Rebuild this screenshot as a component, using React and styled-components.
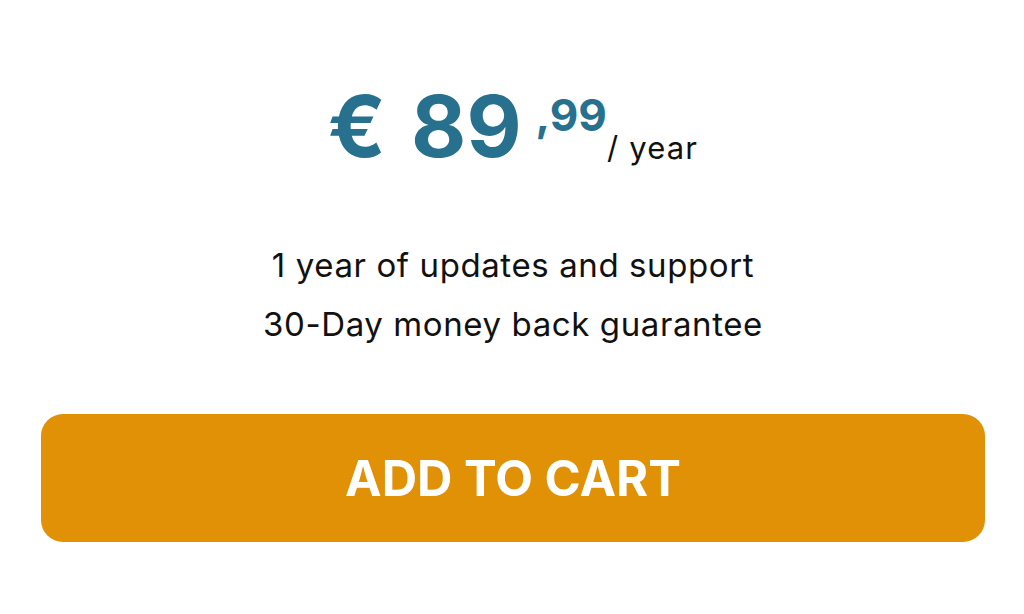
import React from "react";
import styled, { createGlobalStyle } from "styled-components";

const GlobalStyle = createGlobalStyle`
  html, body {
    margin: 0;
    padding: 0;
    background: #ffffff;
  }
  body {
    font-family: Inter, "Noto Sans", sans-serif;
    color: #111111;
  }
`;

const Card = styled.div`
  display: flex;
  flex-direction: column;
  align-items: center;
  padding: 77px 39px 0 41px;
`;

const Price = styled.div`
  color: #27718e;
  font-weight: 700;
  font-size: 85px;
  line-height: 100px;
  white-space: nowrap;
`;

const Amount = styled.span`
  word-spacing: 5px;
`;

const Cents = styled.span`
  display: inline-block;
  font-size: 44px;
  line-height: 1;
  margin-left: 14px;
  vertical-align: 26px;
`;

const Period = styled.span`
  color: #111111;
  font-size: 31px;
  font-weight: 400;
  line-height: 1;
  letter-spacing: 1.2px;
  vertical-align: -2px;
`;

const Features = styled.ul`
  list-style: none;
  margin: 59px 0 0;
  padding: 0;
  text-align: center;
`;

const Feature = styled.li`
  font-size: 33px;
  line-height: 59px;
  letter-spacing: 0.6px;
`;

const CartButton = styled.button`
  align-self: stretch;
  height: 128px;
  margin-top: 60px;
  border: none;
  border-radius: 22px;
  background: #e09106;
  color: #ffffff;
  font-family: Inter, "Noto Sans", sans-serif;
  font-size: 49px;
  font-weight: 700;
  cursor: pointer;
`;

export default function App() {
  return (
    <>
      <GlobalStyle />
      <Card>
        <Price>
          <Amount>€ 89</Amount>
          <Cents>,99</Cents>
          <Period>/ year</Period>
        </Price>
        <Features>
          <Feature>1 year of updates and support</Feature>
          <Feature>30-Day money back guarantee</Feature>
        </Features>
        <CartButton>ADD TO CART</CartButton>
      </Card>
    </>
  );
}
